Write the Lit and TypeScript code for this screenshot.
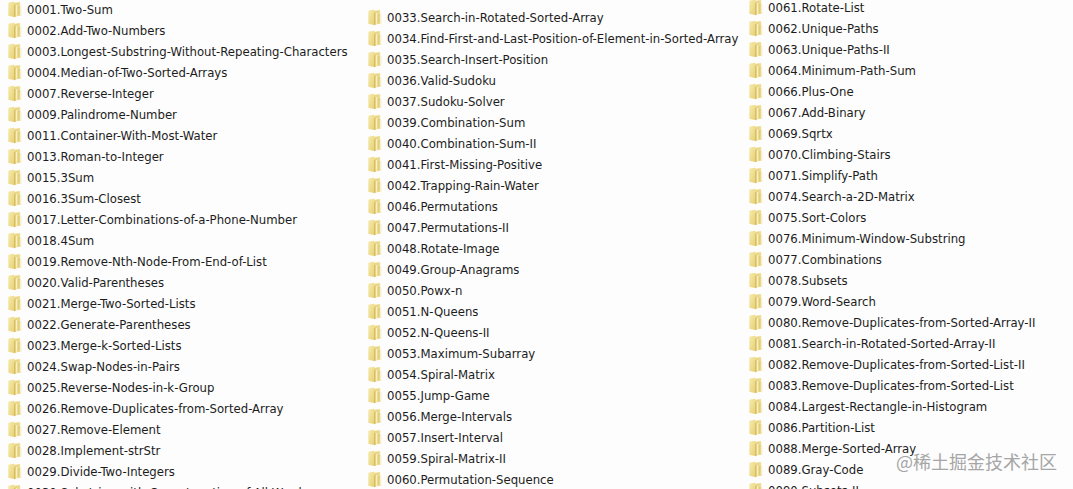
import { LitElement, html, css } from "lit";
import { customElement, property } from "lit/decorators.js";

const FIRST = [
  "0001.Two-Sum",
  "0002.Add-Two-Numbers",
  "0003.Longest-Substring-Without-Repeating-Characters",
  "0004.Median-of-Two-Sorted-Arrays",
  "0007.Reverse-Integer",
  "0009.Palindrome-Number",
  "0011.Container-With-Most-Water",
  "0013.Roman-to-Integer",
  "0015.3Sum",
  "0016.3Sum-Closest",
  "0017.Letter-Combinations-of-a-Phone-Number",
  "0018.4Sum",
  "0019.Remove-Nth-Node-From-End-of-List",
  "0020.Valid-Parentheses",
  "0021.Merge-Two-Sorted-Lists",
  "0022.Generate-Parentheses",
  "0023.Merge-k-Sorted-Lists",
  "0024.Swap-Nodes-in-Pairs",
  "0025.Reverse-Nodes-in-k-Group",
  "0026.Remove-Duplicates-from-Sorted-Array",
  "0027.Remove-Element",
  "0028.Implement-strStr",
  "0029.Divide-Two-Integers",
  "0030.Substring-with-Concatenation-of-All-Words",
];

const SECOND = [
  "0033.Search-in-Rotated-Sorted-Array",
  "0034.Find-First-and-Last-Position-of-Element-in-Sorted-Array",
  "0035.Search-Insert-Position",
  "0036.Valid-Sudoku",
  "0037.Sudoku-Solver",
  "0039.Combination-Sum",
  "0040.Combination-Sum-II",
  "0041.First-Missing-Positive",
  "0042.Trapping-Rain-Water",
  "0046.Permutations",
  "0047.Permutations-II",
  "0048.Rotate-Image",
  "0049.Group-Anagrams",
  "0050.Powx-n",
  "0051.N-Queens",
  "0052.N-Queens-II",
  "0053.Maximum-Subarray",
  "0054.Spiral-Matrix",
  "0055.Jump-Game",
  "0056.Merge-Intervals",
  "0057.Insert-Interval",
  "0059.Spiral-Matrix-II",
  "0060.Permutation-Sequence",
];

const THIRD = [
  "0061.Rotate-List",
  "0062.Unique-Paths",
  "0063.Unique-Paths-II",
  "0064.Minimum-Path-Sum",
  "0066.Plus-One",
  "0067.Add-Binary",
  "0069.Sqrtx",
  "0070.Climbing-Stairs",
  "0071.Simplify-Path",
  "0074.Search-a-2D-Matrix",
  "0075.Sort-Colors",
  "0076.Minimum-Window-Substring",
  "0077.Combinations",
  "0078.Subsets",
  "0079.Word-Search",
  "0080.Remove-Duplicates-from-Sorted-Array-II",
  "0081.Search-in-Rotated-Sorted-Array-II",
  "0082.Remove-Duplicates-from-Sorted-List-II",
  "0083.Remove-Duplicates-from-Sorted-List",
  "0084.Largest-Rectangle-in-Histogram",
  "0086.Partition-List",
  "0088.Merge-Sorted-Array",
  "0089.Gray-Code",
  "0090.Subsets-II",
];

@customElement("folder-icon")
export class FolderIcon extends LitElement {
  static styles = css`
    :host {
      display: block;
      flex: none;
      width: 14px;
      height: 17px;
    }
    svg {
      display: block;
    }
  `;

  render() {
    return html`<svg width="14" height="17" viewBox="0 0 14 17" aria-hidden="true">
      <defs>
        <linearGradient id="back" x1="0" x2="1" y1="0" y2="0">
          <stop offset="0" stop-color="#e6d27c" />
          <stop offset="1" stop-color="#efdf98" />
        </linearGradient>
        <linearGradient id="front" x1="0" x2="1" y1="0" y2="1">
          <stop offset="0" stop-color="#f6ebac" />
          <stop offset="1" stop-color="#e6cf74" />
        </linearGradient>
      </defs>
      <path d="M6 2 11.4 1Q12.2 1 12.2 2V5L13.2 6V14.4L7 15.6Z" fill="url(#back)" />
      <path d="M.3 2.4Q.3 1.6 1.1 1.5L5.6.8Q6.4.8 6.6 1.7L7.2 4V16.2L1 15Q.3 14.9.3 14.2Z" fill="url(#front)" />
      <path d="M6.9 4V15.8" stroke="#cdae4a" stroke-width="1" fill="none" />
      <path d="M8.4 4V14.8" stroke="#f8f0c4" stroke-width="1.4" fill="none" />
      <path d="M12.3 5.6V13.8" stroke="#fbf6dc" stroke-width="1" fill="none" />
      <path d="M10.9 5V14.2" stroke="#d8be62" stroke-width=".8" fill="none" />
    </svg>`;
  }
}

@customElement("folder-list")
export class FolderList extends LitElement {
  @property({ attribute: false }) names: string[] = [];

  static styles = css`
    :host {
      display: block;
      min-width: 0;
    }
    .list {
      margin: 0;
      padding: 0 0 0 8px;
      list-style: none;
    }
    .row {
      display: flex;
      align-items: center;
      gap: 5px;
      height: 21px;
      white-space: nowrap;
    }
  `;

  render() {
    return html`<ul class="list">
      ${this.names.map(
        (name) => html`<li class="row"><folder-icon></folder-icon><span>${name}</span></li>`
      )}
    </ul>`;
  }
}

@customElement("app-root")
export class AppRoot extends LitElement {
  static styles = css`
    :host {
      display: block;
      position: relative;
      height: 100vh;
      overflow: hidden;
      background: #fdfdfd;
      color: #1c1c1c;
      font: 13px/20px "DejaVu Sans Condensed", "Noto Sans", sans-serif;
    }
    .columns {
      display: grid;
      grid-template-columns: 360fr 381fr 332fr;
      align-items: start;
      margin-top: -1px;
    }
    .lower {
      margin-top: 8px;
    }
    .raised {
      margin-top: -2px;
    }
    .watermark {
      position: absolute;
      right: 16px;
      bottom: 14px;
      color: #a6a6a6;
      font-family: "Noto Sans CJK SC", sans-serif;
      font-size: 18px;
      line-height: 28px;
    }
  `;

  render() {
    return html`
      <main class="columns">
        <folder-list .names=${FIRST}></folder-list>
        <folder-list class="lower" .names=${SECOND}></folder-list>
        <folder-list class="raised" .names=${THIRD}></folder-list>
      </main>
      <div class="watermark">@稀土掘金技术社区</div>
    `;
  }
}
